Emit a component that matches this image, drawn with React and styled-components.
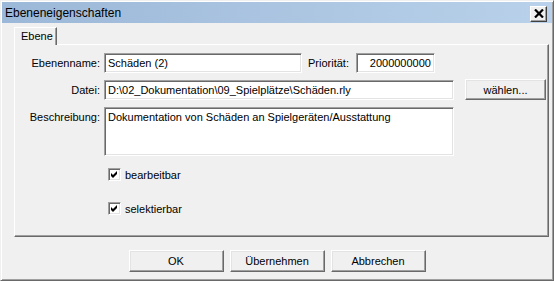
import React from 'react';
import styled, { createGlobalStyle } from 'styled-components';

const GlobalStyle = createGlobalStyle`
  html, body {
    margin: 0;
    padding: 0;
    background: #f0f0f0;
  }
  body {
    font-family: "Liberation Sans", Arial, sans-serif;
    font-size: 11px;
    color: #000;
  }
`;

const Window = styled.div`
  box-sizing: border-box;
  width: 554px;
  height: 281px;
  padding: 1px;
  background: #f0f0f0;
  border: 1px solid;
  border-color: #f0f0f0 #696969 #696969 #f0f0f0;
  box-shadow: inset 1px 1px #fff, inset -1px -1px #a0a0a0;
  display: flex;
  flex-direction: column;
`;

const TitleBar = styled.div`
  height: 21px;
  display: flex;
  align-items: center;
  justify-content: space-between;
  padding: 0 3px 0 3px;
  background: linear-gradient(to right, #9cb8d8, #b9d1ea);
  font-size: 12px;
`;

const CloseButton = styled.div`
  box-sizing: border-box;
  width: 17px;
  height: 16px;
  margin-top: 2px;
  margin-right: 2px;
  display: flex;
  align-items: center;
  justify-content: center;
  background: #f0f0f0;
  border: 1px solid;
  border-color: #fff #404040 #404040 #fff;
  box-shadow: inset -1px -1px #a0a0a0;
`;

const Body = styled.div`
  flex: 1;
  display: flex;
  flex-direction: column;
  padding: 4px 3px 0 12px;
`;

const TabStrip = styled.div`
  display: flex;
  height: 17px;
`;

const Tab = styled.div`
  box-sizing: border-box;
  position: relative;
  z-index: 1;
  width: 43px;
  height: 18px;
  padding: 2px 0 0 6px;
  background: #f0f0f0;
  border: 1px solid;
  border-color: #fff #696969 transparent #fff;
  border-bottom: none;
  box-shadow: inset -1px 0 #a0a0a0;
`;

const Panel = styled.div`
  box-sizing: border-box;
  height: 193px;
  padding: 8px 0 0 0;
  border: 1px solid;
  border-color: #fff #696969 #696969 #fff;
  box-shadow: inset -1px -1px #a0a0a0;
`;

const Form = styled.div`
  display: grid;
  grid-template-columns: 85px 1fr;
  column-gap: 4px;
  row-gap: 7px;
  align-items: start;
`;

const Label = styled.div`
  text-align: right;
  line-height: 20px;
  white-space: nowrap;
`;

const Line = styled.div`
  display: flex;
  align-items: flex-start;
  gap: ${p => p.$gap || 0}px;
`;

const Field = styled.div`
  box-sizing: border-box;
  width: ${p => p.$w}px;
  height: ${p => p.$h || 20}px;
  padding: ${p => (p.$multi ? '2px 3px' : '0 3px')};
  line-height: ${p => (p.$multi ? '14px' : '18px')};
  background: #fff;
  text-align: ${p => (p.$right ? 'right' : 'left')};
  white-space: nowrap;
  overflow: hidden;
  border: 1px solid;
  border-color: #a0a0a0 #fff #fff #a0a0a0;
  box-shadow: inset 1px 1px #696969, inset -1px -1px #e3e3e3;
`;

const InlineLabel = styled.div`
  line-height: 20px;
  margin: 0 7px 0 6px;
`;

const Button = styled.div`
  box-sizing: border-box;
  width: ${p => p.$w}px;
  height: ${p => p.$h || 22}px;
  margin-top: ${p => p.$mt || 0}px;
  display: flex;
  align-items: center;
  justify-content: center;
  background: #f0f0f0;
  border: 1px solid;
  border-color: #fff #696969 #696969 #fff;
  box-shadow: inset -1px -1px #a0a0a0, inset 1px 1px #e3e3e3;
`;

const Checks = styled.div`
  display: flex;
  flex-direction: column;
  gap: 21px;
  margin: 12px 0 0 93px;
`;

const CheckRow = styled.div`
  display: flex;
  align-items: center;
  gap: 4px;
  height: 13px;
`;

const Box = styled.div`
  box-sizing: border-box;
  width: 13px;
  height: 13px;
  padding: 1px;
  background: #fff;
  border: 1px solid;
  border-color: #a0a0a0 #fff #fff #a0a0a0;
  box-shadow: inset 1px 1px #696969, inset -1px -1px #e3e3e3;
  display: flex;
  align-items: center;
  justify-content: center;
`;

const Footer = styled.div`
  display: flex;
  justify-content: center;
  gap: 6px;
  margin-top: 13px;
  padding-right: 9px;
`;

const Checkbox = ({ label }) => (
  <CheckRow>
    <Box>
      <svg width="9" height="9" viewBox="0 0 9 9">
        <polygon points="1,3 3,5 7,1 7,4 3,8 1,6" fill="#000" />
      </svg>
    </Box>
    <span>{label}</span>
  </CheckRow>
);

export default function App() {
  return (
    <>
      <GlobalStyle />
      <Window>
        <TitleBar>
          <span>Ebeneneigenschaften</span>
          <CloseButton>
            <svg width="10" height="9" viewBox="0 0 10 9">
              <path d="M1 0.5 L9 8.5 M9 0.5 L1 8.5" stroke="#000" strokeWidth="2.2" />
            </svg>
          </CloseButton>
        </TitleBar>
        <Body>
          <TabStrip>
            <Tab>Ebene</Tab>
          </TabStrip>
          <Panel>
            <Form>
              <Label>Ebenenname:</Label>
              <Line>
                <Field $w={198}>Schäden (2)</Field>
                <InlineLabel>Priorität:</InlineLabel>
                <Field $w={79} $right>2000000000</Field>
              </Line>
              <Label>Datei:</Label>
              <Line $gap={11}>
                <Field $w={350}>D:\02_Dokumentation\09_Spielplätze\Schäden.rly</Field>
                <Button $w={81} $h={21} $mt={-1}>wählen...</Button>
              </Line>
              <Label>Beschreibung:</Label>
              <Field $w={350} $h={49} $multi>
                Dokumentation von Schäden an Spielgeräten/Ausstattung
              </Field>
            </Form>
            <Checks>
              <Checkbox label="bearbeitbar" />
              <Checkbox label="selektierbar" />
            </Checks>
          </Panel>
          <Footer>
            <Button $w={95}>OK</Button>
            <Button $w={95}>Übernehmen</Button>
            <Button $w={95}>Abbrechen</Button>
          </Footer>
        </Body>
      </Window>
    </>
  );
}
